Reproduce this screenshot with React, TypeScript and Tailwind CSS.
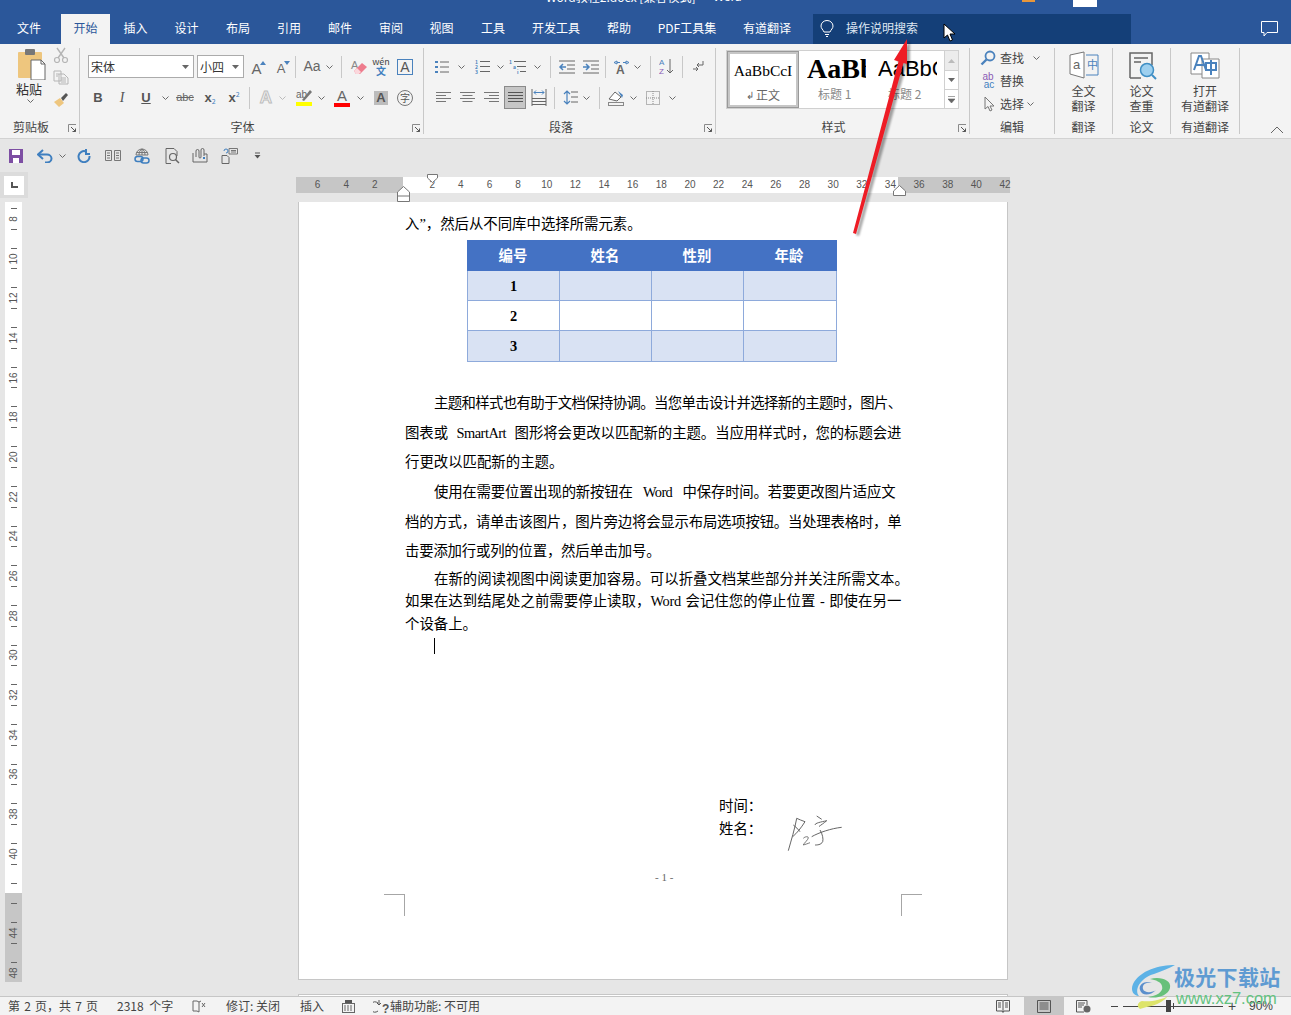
import React from "react";

const G = "#666666";
const B = "#4a82bd";

function Caret({ c = "#6a6a6a" }: { c?: string }) {
  return (
    <svg width="7" height="4" viewBox="0 0 7 4" fill="none">
      <path d="M0.5 0.5 L3.5 3.5 L6.5 0.5" stroke={c} strokeWidth="1" />
    </svg>
  );
}
function S({ className = "", children }: { className?: string; children?: React.ReactNode }) {
  return <div className={"flex items-center justify-center shrink-0 " + className}>{children}</div>;
}
function Sep({ className = "" }: { className?: string }) {
  return <div className={"w-px h-[22px] bg-[#c8c8c8] shrink-0 " + className} />;
}
function Launcher() {
  return (
    <svg className="absolute right-[2px] bottom-[1px]" width="9" height="9" viewBox="0 0 9 9" fill="none">
      <path d="M0.5 8 V0.5 H8" stroke="#8a8a8a" />
      <path d="M3 3 L7.5 7.5 M7.5 4.5 V7.5 H4.5" stroke="#555" />
    </svg>
  );
}
function Lines({ ys, x1 = 1, x2 = 19, c = G }: { ys: number[]; x1?: number; x2?: number; c?: string }) {
  return <path d={ys.map((y) => `M${x1} ${y}H${x2}`).join("")} stroke={c} strokeWidth="1" fill="none" />;
}
function Ico({ w = 20, h = 18, children }: { w?: number; h?: number; children: React.ReactNode }) {
  return (
    <svg width={w} height={h} viewBox={`0 0 ${w} ${h}`} fill="none">
      {children}
    </svg>
  );
}

const tabClass = "flex items-center justify-center shrink-0 h-[30px] pb-[2px] text-white text-[12px]";
const label = "h-[17px] leading-[19px]";

function Ribbon() {
  return (
    <div className="h-[95px] shrink-0 bg-[#f3f3f3] border-b border-[#d2d2d2] flex pt-[4px] text-[#444] text-[12px] relative">
      {/* clipboard */}
      <div className="w-[80px] h-[86px] border-r border-[#c8c8c8] relative shrink-0 flex flex-col">
        <div className="h-[69px] flex">
          <div className="w-[48px] pl-[10px] flex flex-col items-center">
            <svg className="ml-[3px]" width="30" height="32" viewBox="0 0 30 32" fill="none">
              <rect x="2" y="4" width="24" height="26" rx="1" fill="#eec67e" />
              <rect x="9" y="1" width="10" height="6" rx="1" fill="#777" />
              <path d="M15 12 H25 L29 16 V32 H15 Z" fill="#fff" stroke="#666" />
              <path d="M25 12 V16 H29" stroke="#666" />
            </svg>
            <div className="text-[13px] leading-[16px] text-[#333] mt-[1px]">粘贴</div>
            <div className="mt-[2px] ml-[3px]"><Caret /></div>
          </div>
          <div className="flex flex-col items-center w-[24px] ml-[1px] -mt-[1px] gap-[7px]">
            <Ico w={16} h={16}>
              <path d="M4 1 L11 11 M12 1 L5 11" stroke="#b5b5b5" strokeWidth="1.4" />
              <circle cx="4" cy="13" r="2.5" stroke="#b5b5b5" strokeWidth="1.2" />
              <circle cx="12" cy="13" r="2.5" stroke="#b5b5b5" strokeWidth="1.2" />
            </Ico>
            <Ico w={16} h={15}>
              <path d="M1 1 H8 V11 H1 Z M6 4 H11 L15 8 V14 H6 Z" stroke="#b5b5b5" fill="#f3f3f3" />
              <path d="M8 8 H13 M8 10 H13 M8 12 H13 M3 4H6M3 6H5" stroke="#b5b5b5" />
            </Ico>
            <Ico w={16} h={16}>
              <path d="M1 10 L7 6 L11 11 L6 15 Z" fill="#eec67e" />
              <path d="M8 6 L13 1 L15 3 L10 9 Z" fill="#555" />
            </Ico>
          </div>
        </div>
        <div className={label + " pl-[13px]"}>剪贴板</div>
        <Launcher />
      </div>

      {/* font */}
      <div className="w-[344px] h-[86px] border-r border-[#c8c8c8] relative shrink-0 flex flex-col">
        <div className="h-[69px] pt-[7px] flex flex-col gap-[8px]">
          <div className="flex items-center h-[23px] pl-[8px]">
            <div className="w-[106px] h-[23px] border border-[#ababab] bg-white flex items-center justify-between pl-[2px] pr-[4px] shrink-0">
              <span className="text-[#333]">宋体</span>
              <svg width="7" height="4" viewBox="0 0 7 4"><path d="M0 0H7L3.5 4Z" fill="#666" /></svg>
            </div>
            <div className="ml-[3px] w-[47px] h-[23px] border border-[#ababab] bg-white flex items-center justify-between pl-[2px] pr-[4px] shrink-0">
              <span className="text-[#333]">小四</span>
              <svg width="7" height="4" viewBox="0 0 7 4"><path d="M0 0H7L3.5 4Z" fill="#666" /></svg>
            </div>
            <S className="ml-[3px] w-[22px] relative">
              <span className="text-[15px] text-[#666] font-['Liberation_Sans'] leading-none mt-[3px] -ml-[3px]">A</span>
              <svg className="absolute right-[3px] top-[3px]" width="6" height="4"><path d="M0 4H6L3 0Z" fill={B} /></svg>
            </S>
            <S className="ml-[2px] w-[22px] relative">
              <span className="text-[13px] text-[#666] font-['Liberation_Sans'] leading-none mt-[4px] -ml-[2px]">A</span>
              <svg className="absolute right-[3px] top-[3px]" width="6" height="4"><path d="M0 0H6L3 4Z" fill={B} /></svg>
            </S>
            <Sep className="ml-[2px]" />
            <S className="ml-[5px] w-[22px]"><span className="text-[14px] text-[#666] font-['Liberation_Sans']">Aa</span></S>
            <S className="w-[12px]"><Caret /></S>
            <Sep className="ml-[6px]" />
            <S className="ml-[6px] w-[22px]">
              <Ico w={18} h={18}>
                <text x="1" y="11" fontSize="11" fill="#888" fontFamily="Liberation Sans">A</text>
                <path d="M4 13 L12 5 L17 9 L10 16 H6 Z" fill="#ee7c8d" />
                <path d="M4 13 L7 10 L11 14 L9 16 H6 Z" fill="#fbd7dc" />
              </Ico>
            </S>
            <S className="w-[22px]">
              <div className="flex flex-col items-center leading-none">
                <span className="text-[9px] text-[#444] leading-[9px]">wén</span>
                <span className="text-[10px] text-[#3f7fbf] leading-[10px] font-bold">文</span>
              </div>
            </S>
            <S className="ml-[2px] w-[22px]">
              <div className="w-[16px] h-[16px] border border-[#4a82bd] flex items-center justify-center text-[14px] text-[#555] font-['Liberation_Sans'] leading-none">A</div>
            </S>
          </div>
          <div className="flex items-center h-[23px] pl-[6px]">
            <S className="w-[24px] font-bold text-[#555] font-['Liberation_Sans'] text-[13px]">B</S>
            <S className="w-[24px] italic text-[#555] font-['Liberation_Serif'] text-[14px]">I</S>
            <S className="w-[24px]"><span className="underline font-bold text-[#555] font-['Liberation_Sans'] text-[13px]">U</span></S>
            <S className="w-[14px]"><Caret /></S>
            <S className="w-[26px]"><span className="line-through text-[#666] font-['Liberation_Sans'] text-[11px]">abc</span></S>
            <S className="w-[24px]"><span className="font-bold text-[#555] text-[13px] font-['Liberation_Sans']">x</span><span className="text-[7px] text-[#3f7fbf] mt-[7px]">2</span></S>
            <S className="w-[24px]"><span className="font-bold text-[#555] text-[13px] font-['Liberation_Sans']">x</span><span className="text-[7px] text-[#3f7fbf] -mt-[6px]">2</span></S>
            <Sep className="ml-[3px]" />
            <S className="ml-[4px] w-[24px]"><span className="text-[17px] text-[#f3f3f3] font-bold font-['Liberation_Sans'] [-webkit-text-stroke:1px_#bdbdbd]">A</span></S>
            <S className="w-[8px]"><Caret c="#bbb" /></S>
            <S className="ml-[6px] w-[24px]">
              <Ico w={18} h={19}>
                <text x="1" y="10" fontSize="10" fill="#666" fontFamily="Liberation Sans">ab</text>
                <path d="M7 12 L15 2 L17 4 L9 13 Z" fill="#777" />
                <rect x="1" y="14" width="16" height="4" fill="#ffff00" />
              </Ico>
            </S>
            <S className="w-[10px]"><Caret /></S>
            <S className="ml-[4px] w-[24px]">
              <div className="flex flex-col items-center">
                <span className="text-[15px] leading-[14px] text-[#666] font-['Liberation_Sans']">A</span>
                <div className="w-[16px] h-[4px] bg-[#ff0000]" />
              </div>
            </S>
            <S className="w-[12px]"><Caret /></S>
            <S className="ml-[3px] w-[24px]">
              <div className="w-[14px] h-[14px] bg-[#bcbcbc] flex items-center justify-center text-[13px] text-[#555] font-bold font-['Liberation_Sans'] leading-none">A</div>
            </S>
            <S className="w-[24px]">
              <div className="w-[16px] h-[16px] rounded-full border border-[#777] flex items-center justify-center text-[10px] text-[#555] leading-none">字</div>
            </S>
          </div>
        </div>
        <div className={label + " text-center pr-[18px]"}>字体</div>
        <Launcher />
      </div>

      {/* paragraph */}
      <div className="w-[292px] h-[86px] border-r border-[#c8c8c8] relative shrink-0 flex flex-col">
        <div className="h-[69px] pt-[7px] flex flex-col gap-[8px]">
          <div className="flex items-center h-[23px] pl-[6px]">
            <S className="w-[24px]">
              <Ico w={14} h={14}>
                <Lines ys={[2, 7, 12]} x1={5} x2={14} />
                <path d="M0 1h3v2h-3zM0 6h3v2h-3zM0 11h3v2h-3z" fill={B} />
              </Ico>
            </S>
            <S className="w-[14px]"><Caret /></S>
            <S className="ml-[2px] w-[24px]">
              <Ico w={15} h={15}>
                <Lines ys={[2.5, 7.5, 12.5]} x1={5} x2={15} />
                <text x="0" y="5" fontSize="5" fill={B} fontWeight="bold">1</text>
                <text x="0" y="10" fontSize="5" fill={B} fontWeight="bold">2</text>
                <text x="0" y="15" fontSize="5" fill={B} fontWeight="bold">3</text>
              </Ico>
            </S>
            <S className="w-[12px]"><Caret /></S>
            <S className="w-[22px]">
              <Ico w={17} h={15}>
                <path d="M5 2.5H17M8 7.5H17M11 12.5H17" stroke={G} />
                <text x="0" y="5" fontSize="5" fill={B} fontWeight="bold">1</text>
                <text x="4" y="10" fontSize="5" fill={B} fontWeight="bold">a</text>
                <text x="8" y="15" fontSize="5" fill={B} fontWeight="bold">i</text>
              </Ico>
            </S>
            <S className="w-[18px]"><Caret /></S>
            <Sep className="ml-[4px]" />
            <S className="ml-[4px] w-[22px]">
              <Ico w={17} h={14}>
                <path d="M1 1H17M9 5H17M9 9H17M1 13H17" stroke={G} />
                <path d="M8 7H2M5 4L2 7L5 10" stroke={B} strokeWidth="1.5" />
              </Ico>
            </S>
            <S className="ml-[2px] w-[22px]">
              <Ico w={17} h={14}>
                <path d="M1 1H17M9 5H17M9 9H17M1 13H17" stroke={G} />
                <path d="M1 7H7M4 4L7 7L4 10" stroke={B} strokeWidth="1.5" />
              </Ico>
            </S>
            <Sep className="ml-[4px]" />
            <S className="ml-[4px] w-[22px]">
              <Ico w={17} h={14}>
                <path d="M1 2.5L4 1V4ZM16 2.5L13 1V4ZM4 2.5H7M10 2.5H13" stroke={B} />
                <text x="3" y="14" fontSize="12" fontWeight="bold" fill={G} fontFamily="Liberation Sans">A</text>
              </Ico>
            </S>
            <S className="w-[10px]"><Caret /></S>
            <Sep className="ml-[8px]" />
            <S className="ml-[4px] w-[22px]">
              <Ico w={15} h={17}>
                <text x="0" y="7" fontSize="8" fill={B} fontFamily="Liberation Sans">A</text>
                <text x="0" y="16" fontSize="8" fill="#8a5bb5" fontFamily="Liberation Sans">Z</text>
                <path d="M11 1V15M8 12L11 15L14 12" stroke={G} />
              </Ico>
            </S>
            <Sep className="ml-[5px]" />
            <S className="ml-[4px] w-[22px]">
              <Ico w={12} h={13}>
                <path d="M11 1V5H5M7 3L5 5L7 7" stroke={G} />
                <path d="M1 9H6M4 7L6 9L4 11" stroke={G} />
              </Ico>
            </S>
          </div>
          <div className="flex items-center h-[23px] pl-[7px]">
            <S className="w-[24px]"><Ico w={15} h={11}><Lines ys={[0.5, 3.5, 6.5, 9.5]} x1={0} x2={15} c="#777" /><path d="M10 3.5H15M10 9.5H15" stroke="#f3f3f3" /></Ico></S>
            <S className="w-[24px]"><Ico w={15} h={11}><Lines ys={[0.5, 3.5, 6.5, 9.5]} x1={0} x2={15} c="#777" /><path d="M0 3.5H2.5M12.5 3.5H15M0 9.5H2.5M12.5 9.5H15" stroke="#f3f3f3" /></Ico></S>
            <S className="w-[24px]"><Ico w={15} h={11}><Lines ys={[0.5, 3.5, 6.5, 9.5]} x1={0} x2={15} c="#777" /><path d="M0 3.5H5M0 9.5H5" stroke="#f3f3f3" /></Ico></S>
            <S className="ml-[1px] w-[22px] h-[23px] bg-[#c6c6c6] border border-[#8a8a8a]"><Ico w={15} h={11}><Lines ys={[0.5, 3.5, 6.5, 9.5]} x1={0} x2={15} c="#555" /></Ico></S>
            <S className="ml-[2px] w-[22px]">
              <Ico w={16} h={17}>
                <path d="M1 0V17M15 0V17M1 9.5H15M1 12.5H15M1 15.5H15" stroke={G} />
                <path d="M3 3.5H13M5 1.5L3 3.5L5 5.5M11 1.5L13 3.5L11 5.5" stroke={B} />
              </Ico>
            </S>
            <Sep className="ml-[4px]" />
            <S className="ml-[4px] w-[22px]">
              <Ico w={15} h={17}>
                <path d="M4 2V15M1 5L4 2L7 5M1 12L4 15L7 12" stroke={B} strokeWidth="1.2" />
                <path d="M8 3H15M8 8H15M8 13H15" stroke={G} />
              </Ico>
            </S>
            <S className="w-[10px]"><Caret /></S>
            <Sep className="ml-[8px]" />
            <S className="ml-[5px] w-[22px]">
              <Ico w={16} h={17}>
                <path d="M1 10L7 3L13 8L9 12Z" stroke={G} fill="#fff" />
                <path d="M10 2 L15 6 L14 9Z" fill={B} />
                <rect x="0.5" y="13.5" width="15" height="3" fill="#f3f3f3" stroke="#888" />
              </Ico>
            </S>
            <S className="w-[12px]"><Caret /></S>
            <S className="ml-[3px] w-[22px]">
              <Ico w={14} h={14}>
                <rect x="0.5" y="0.5" width="13" height="13" stroke="#777" strokeDasharray="1 1" />
                <path d="M7 0V14M0 7H14" stroke="#888" strokeDasharray="1 1" />
              </Ico>
            </S>
            <S className="w-[16px]"><Caret /></S>
          </div>
        </div>
        <div className={label + " text-center pr-[17px]"}>段落</div>
        <Launcher />
      </div>

      {/* styles */}
      <div className="w-[254px] h-[86px] border-r border-[#c8c8c8] relative shrink-0 flex flex-col">
        <div className="h-[69px] pt-[2px] pl-[10px]">
          <div className="w-[233px] h-[59px] border border-[#d0d0d0] bg-white flex">
            <div className="w-[72px] h-full border-[3px] border-[#c6c6c6] outline outline-1 outline-[#999] -outline-offset-1 flex flex-col items-center overflow-hidden shrink-0">
              <div className="h-[33px] leading-[34px] text-[15.5px] text-black font-['Liberation_Serif'] whitespace-nowrap">AaBbCcI</div>
              <div className="text-[12px] text-[#666] flex items-center gap-[2px] leading-[15px]"><span className="text-[10px]">↲</span><span>正文</span></div>
            </div>
            <div className="w-[70px] h-full flex flex-col shrink-0 overflow-hidden pl-[8px]">
              <div className="h-[35px] leading-[35px] text-[28px] font-bold text-black font-['Liberation_Serif'] whitespace-nowrap overflow-hidden w-[59px]">AaBb</div>
              <div className="text-[#888] leading-[16px] pl-[11px]">标题 1</div>
            </div>
            <div className="w-[75px] h-full flex flex-col shrink-0 overflow-hidden pl-[9px]">
              <div className="h-[35px] leading-[35px] text-[22px] text-black font-['Liberation_Sans'] whitespace-nowrap overflow-hidden w-[59px]">AaBbCc</div>
              <div className="text-[#888] leading-[16px] pl-[10px]">标题 2</div>
            </div>
            <div className="w-[14px] h-full flex flex-col shrink-0 border-l border-[#d0d0d0]">
              <S className="h-[20px] border-b border-[#d0d0d0] bg-[#ececec]"><svg width="7" height="4"><path d="M0 4H7L3.5 0Z" fill="#bbb" /></svg></S>
              <S className="h-[19px] border-b border-[#d0d0d0]"><svg width="7" height="4"><path d="M0 0H7L3.5 4Z" fill="#666" /></svg></S>
              <S className="flex-1"><svg width="7" height="7"><path d="M0 0.5H7M0 3H7L3.5 7Z" stroke="#666" strokeWidth="0.6" fill="#666" /></svg></S>
            </div>
          </div>
        </div>
        <div className={label + " text-center pr-[18px]"}>样式</div>
        <Launcher />
      </div>

      {/* editing */}
      <div className="w-[85px] h-[86px] border-r border-[#c8c8c8] shrink-0 flex flex-col">
        <div className="h-[71px] flex flex-col pl-[10px] -mt-[2px]">
          <div className="h-[23px] flex items-center">
            <Ico w={16} h={16}>
              <circle cx="10" cy="6" r="4.5" stroke={B} strokeWidth="1.8" />
              <path d="M6.5 9.5L1.5 14.5" stroke={B} strokeWidth="2.4" />
            </Ico>
            <span className="ml-[4px]">查找</span>
            <span className="ml-[9px]"><Caret /></span>
          </div>
          <div className="h-[23px] flex items-center">
            <div className="w-[16px] flex flex-col items-center leading-[8px] text-[10px] font-['Liberation_Sans']">
              <span className="text-[#8a5bb5]">ab</span>
              <span className="text-[#3f7fbf] ml-[2px]">ac</span>
            </div>
            <span className="ml-[4px]">替换</span>
          </div>
          <div className="h-[23px] flex items-center">
            <Ico w={16} h={16}>
              <path d="M5 1V13L8 10.5L10 15L12 14L10 10H14Z" stroke="#777" fill="#f3f3f3" />
            </Ico>
            <span className="ml-[4px]">选择</span>
            <span className="ml-[3px]"><Caret /></span>
          </div>
        </div>
        <div className={label + " text-center"}>编辑</div>
      </div>

      {/* translate */}
      <div className="w-[58px] h-[86px] border-r border-[#c8c8c8] shrink-0 flex flex-col items-center">
        <div className="h-[69px] flex flex-col items-center">
          <div className="h-[35px] pt-[3px]">
            <Ico w={30} h={28}>
              <path d="M1 4L15 1V27L1 23Z" stroke="#777" fill="#fff" />
              <text x="4" y="18" fontSize="13" fill="#666" fontFamily="Liberation Sans">a</text>
              <path d="M17 4H29V24H17" stroke={B} fill="#f3f3f3" />
              <text x="18" y="18" fontSize="11" fill={B}>中</text>
            </Ico>
          </div>
          <div className="leading-[15px] text-center text-[12px]">全文<br />翻译</div>
        </div>
        <div className={label}>翻译</div>
      </div>

      {/* paper */}
      <div className="w-[58px] h-[86px] border-r border-[#c8c8c8] shrink-0 flex flex-col items-center">
        <div className="h-[69px] flex flex-col items-center">
          <div className="h-[35px] pt-[3px]">
            <Ico w={30} h={30}>
              <path d="M3 27V2H25V14" stroke="#666" strokeWidth="1.5" />
              <path d="M3 27H14" stroke="#666" strokeWidth="1.5" />
              <path d="M7 7H21M7 11H14" stroke="#666" strokeWidth="1.5" />
              <circle cx="20" cy="19" r="6.5" fill="#9ed0ef" stroke="#3f8fc5" strokeWidth="1.5" />
              <path d="M25 24L29 28" stroke="#3f8fc5" strokeWidth="2" />
            </Ico>
          </div>
          <div className="leading-[15px] text-center text-[12px]">论文<br />查重</div>
        </div>
        <div className={label}>论文</div>
      </div>

      {/* youdao */}
      <div className="w-[69px] h-[86px] border-r border-[#c8c8c8] shrink-0 flex flex-col items-center">
        <div className="h-[69px] flex flex-col items-center">
          <div className="h-[35px] pt-[4px]">
            <Ico w={30} h={27}>
              <path d="M1 1H19V22H1Z" stroke="#888" fill="#fff" />
              <path d="M12 7H29V26H12Z" stroke="#888" fill="#fff" />
              <path d="M4 18L9 4H11L16 18M6 13H14" stroke={B} strokeWidth="2" />
              <path d="M16 11H26V18H16ZM21 8V23" stroke={B} strokeWidth="2" />
            </Ico>
          </div>
          <div className="leading-[15px] text-center text-[12px]">打开<br />有道翻译</div>
        </div>
        <div className={label}>有道翻译</div>
      </div>

      <svg className="absolute left-[1270px] top-[82px]" width="14" height="8" viewBox="0 0 14 8" fill="none">
        <path d="M1 7L7 1L13 7" stroke="#666" />
      </svg>
    </div>
  );
}

function QAT() {
  return (
    <div className="h-[33px] shrink-0 bg-[#e6e6e6] flex items-center pl-[9px]">
      <S className="w-[14px]">
        <Ico w={14} h={14}>
          <path d="M0 0H14V14H0Z" fill="#7d4ea3" />
          <rect x="3" y="1" width="8" height="5" fill="#fff" />
          <rect x="4" y="9" width="6" height="5" fill="#fff" />
        </Ico>
      </S>
      <S className="ml-[12px] w-[20px]">
        <Ico w={16} h={14}>
          <path d="M6 1L1 5.5L6 10" stroke="#3f7fbf" strokeWidth="2" />
          <path d="M2 5.5H10A4.5 4 0 0 1 10 13.5H8" stroke="#3f7fbf" strokeWidth="2" />
        </Ico>
      </S>
      <S className="ml-[3px] w-[8px]"><Caret /></S>
      <S className="ml-[9px] w-[18px]">
        <Ico w={14} h={14}>
          <path d="M9 2.5A5.5 5.5 0 1 0 12.5 7" stroke="#3f7fbf" strokeWidth="2" />
          <path d="M9 0V5H13" stroke="#3f7fbf" strokeWidth="2" />
        </Ico>
      </S>
      <S className="ml-[11px] w-[18px]">
        <Ico w={16} h={11}>
          <path d="M0.5 0.5H6.5V10.5H0.5ZM9.5 0.5H15.5V10.5H9.5ZM2 3H5M2 5.5H5M2 8H5M11 3H14M11 5.5H14M11 8H14" stroke="#777" />
        </Ico>
      </S>
      <S className="ml-[11px] w-[18px]">
        <Ico w={16} h={16}>
          <path d="M2 7A6 6 0 0 1 14 7ZM8 1V7M5 7C5 4 6 2 8 1C10 2 11 4 11 7M2.5 4.5H13.5" stroke="#777" />
          <rect x="1" y="8.5" width="8" height="5" rx="2.5" stroke="#3f7fbf" strokeWidth="1.5" />
          <rect x="7" y="10" width="8" height="5" rx="2.5" stroke="#3f7fbf" strokeWidth="1.5" />
        </Ico>
      </S>
      <S className="ml-[12px] w-[18px]">
        <Ico w={15} h={16}>
          <path d="M1 0.5H9L12 3.5V8M1 0.5V15.5H6" stroke="#666" />
          <circle cx="8" cy="9" r="3.5" stroke="#666" strokeWidth="1.2" />
          <path d="M10.5 11.5L14 15" stroke="#666" strokeWidth="1.5" />
        </Ico>
      </S>
      <S className="ml-[10px] w-[18px]">
        <Ico w={16} h={15}>
          <path d="M1 5V14H15V6H12" stroke="#666" />
          <path d="M4 9V3A1.5 1.5 0 0 1 7 3V9A1 1 0 0 0 9 9V2A1.5 1.5 0 0 1 12 2V8" stroke="#666" />
          <rect x="11" y="9" width="2" height="2" fill="#3f7fbf" />
        </Ico>
      </S>
      <S className="ml-[11px] w-[18px]">
        <Ico w={17} h={16}>
          <path d="M8 0.5H16.5V6H8ZM10 2.5H15M10 4H15" stroke="#777" />
          <path d="M1 7.5H6L8 9.5V15.5H1Z" stroke="#666" />
          <path d="M3 3A2 2 0 1 1 5 5" stroke="#3f7fbf" />
        </Ico>
      </S>
      <S className="ml-[10px] w-[18px]">
        <Ico w={7} h={7}>
          <path d="M1 1H6" stroke="#555" />
          <path d="M0.5 3H6.5L3.5 6.5Z" fill="#555" />
        </Ico>
      </S>
    </div>
  );
}

const hNums = ["6", "4", "2", "", "2", "4", "6", "8", "10", "12", "14", "16", "18", "20", "22", "24", "26", "28", "30", "32", "34", "36", "38", "40", "42"];

function HRuler() {
  return (
    <div className="h-[30px] shrink-0 flex bg-[#e6e6e6] relative">
      <div className="w-[28px] h-[26px] bg-[#dcdcdc] flex items-center justify-center shrink-0">
        <div className="w-[20px] h-[19px] bg-white flex items-center justify-center">
          <svg width="7" height="6"><path d="M1 0V5H7" stroke="#555" strokeWidth="2" fill="none" /></svg>
        </div>
      </div>
      <div className="ml-[268px] mt-[5px] w-[714px] h-[16px] bg-[linear-gradient(90deg,#c6c6c6_107px,#fff_107px,#fff_602px,#c6c6c6_602px)] flex pl-[7.3px] text-[10px] text-[#555] font-['Liberation_Sans'] shrink-0">
        {hNums.map((n, i) => (
          <div key={i} className="w-[28.65px] shrink-0 text-center leading-[16px]">{n}</div>
        ))}
      </div>
      <svg className="absolute left-[427px] top-[2px]" width="11" height="9" viewBox="0 0 11 9">
        <path d="M0.5 0.5H10.5V4L5.5 8.5L0.5 4Z" fill="#fff" stroke="#777" />
      </svg>
      <svg className="absolute left-[397px] top-[14px]" width="13" height="16" viewBox="0 0 13 16">
        <path d="M0.5 6L6.5 0.5L12.5 6V15.5H0.5Z M0.5 10H12.5" fill="#fff" stroke="#777" />
      </svg>
      <svg className="absolute left-[893px] top-[13px]" width="13" height="11" viewBox="0 0 13 11">
        <path d="M0.5 6L6.5 0.5L12.5 6V10.5H0.5Z" fill="#fff" stroke="#777" />
      </svg>
    </div>
  );
}

const vNums = ["8", "10", "12", "14", "16", "18", "20", "22", "24", "26", "28", "30", "32", "34", "36", "38", "40", "", "44", "48"];

function VRuler() {
  return (
    <div className="ml-[5px] w-[17px] h-[780px] shrink-0 overflow-hidden bg-[linear-gradient(180deg,#fff_691px,#c6c6c6_691px)] text-[10px] text-[#555] font-['Liberation_Sans']">
      <div className="-mt-[3px] flex flex-col">
        {vNums.map((n, i) => (
          <div key={i} className="h-[39.7px] shrink-0 flex flex-col items-center justify-between py-[9px]">
            <div className="w-[6px] h-px bg-[#666]" />
            <div className="-rotate-90 leading-none h-[10px] flex items-center">{n}</div>
            <div className="w-[6px] h-px bg-[#666]" />
          </div>
        ))}
      </div>
    </div>
  );
}

const line = "whitespace-nowrap h-[29.7px] leading-[29.7px] [text-align-last:justify]";
const left = "whitespace-nowrap h-[29.7px] leading-[29.7px] text-left";
const line2 = "whitespace-nowrap h-[22.3px] leading-[22.3px] [text-align-last:justify]";
const th = "w-[92px] shrink-0 flex items-center justify-center pt-[2px] font-bold text-white text-[14.4px]";
const td = "w-[92px] shrink-0 flex items-center justify-center pt-[2px] border-r border-[#8eaadb] last:border-r-0 font-bold text-[14.4px] text-black";

function Row({ n, shaded, h }: { n: string; shaded?: boolean; h: string }) {
  return (
    <div className={"flex border-b border-[#8eaadb] " + h + (shaded ? " bg-[#d9e2f3]" : " bg-white")}>
      <div className={td}>{n}</div>
      <div className={td} />
      <div className={td} />
      <div className={td} />
    </div>
  );
}

function Page() {
  return (
    <div className="ml-[276px] w-[710px] h-[778px] bg-white border-x border-b border-[#c6c6c6] shrink-0 pl-[106px] text-black text-[14.4px] font-['Liberation_Serif','Noto_Sans_CJK_SC',serif] relative">
      <div className="mt-[11px] h-[22px] leading-[22px] whitespace-nowrap">入”，然后从不同库中选择所需元素。</div>
      <div className="ml-[62px] mt-[5px] w-[370px] border-x border-[#8eaadb]">
        <div className="flex h-[31px] bg-[#4472c4] -mx-px">
          <div className={th}>编号</div>
          <div className={th}>姓名</div>
          <div className={th}>性别</div>
          <div className={th}>年龄</div>
        </div>
        <Row n="1" shaded h="h-[30px]" />
        <Row n="2" h="h-[30px]" />
        <Row n="3" shaded h="h-[31px]" />
      </div>
      <div className="mt-[27px]">
        <div className={line + " w-[496px] pl-[29px] tracking-[-1.1px]"}>主题和样式也有助于文档保持协调。当您单击设计并选择新的主题时，图片、</div>
        <div className={line + " w-[496px] tracking-[-0.5px] [word-spacing:5px]"}>图表或 SmartArt 图形将会更改以匹配新的主题。当应用样式时，您的标题会进</div>
        <div className={left}>行更改以匹配新的主题。</div>
        <div className={line + " w-[490px] pl-[29px] tracking-[-0.6px] [word-spacing:7px]"}>使用在需要位置出现的新按钮在 Word 中保存时间。若要更改图片适应文</div>
        <div className={line + " w-[496px] tracking-[-0.7px]"}>档的方式，请单击该图片，图片旁边将会显示布局选项按钮。当处理表格时，单</div>
        <div className={left + " tracking-[-0.2px]"}>击要添加行或列的位置，然后单击加号。</div>
      </div>
      <div className="mt-[1px]">
        <div className={line2 + " w-[498px] pl-[29px]"}>在新的阅读视图中阅读更加容易。可以折叠文档某些部分并关注所需文本。</div>
        <div className={line2 + " w-[496px] tracking-[-0.3px] [word-spacing:1px]"}>如果在达到结尾处之前需要停止读取，Word 会记住您的停止位置 - 即使在另一</div>
        <div className="whitespace-nowrap h-[22.3px] leading-[22.3px]">个设备上。</div>
        <div className="h-[22.3px] pl-[29px] flex items-center"><div className="w-px h-[16px] bg-black" /></div>
      </div>
      <div className="ml-[314px] mt-[138px] h-[22px] leading-[22px]">时间：</div>
      <div className="ml-[314px] mt-[1px] h-[22px] leading-[22px] relative">
        姓名：
        <svg className="absolute left-[67px] top-[-4px]" width="58" height="38" viewBox="0 0 58 38" fill="none">
          <path d="M2.3 36.7C5 27 9 14 10.7 4.3C13 5 16 7 19 7.7C15 14 11 19 6.7 22.7M7.3 11C10 13 12 15 14 17.7" stroke="#555" strokeWidth="0.9" />
          <path d="M17.3 24.3C19 22.5 22.5 22 22.3 24C22 26 18 29 17.3 31C19 30.5 22 29.5 24 28.7" stroke="#555" strokeWidth="0.8" />
          <path d="M30.7 2L35.7 5.3M29 11C29 9 35 8 40.7 6.7C38 9 35 11 33 12.5M25.7 22.7C33 18.5 45 14.5 55.7 13.3M34 16C36.5 20 37.5 25 36.7 27.7C35 31 31 31 29 31" stroke="#555" strokeWidth="0.9" />
        </svg>
      </div>
      <div className="ml-[250px] mt-[30px] h-[14px] leading-[14px] text-[11px] text-[#666] whitespace-nowrap">- 1 -</div>
      <div className="mt-[10px] -ml-[21px] flex">
        <div className="w-[21px] h-[22px] border-t border-r border-[#a6a6a6] shrink-0" />
        <div className="w-[21px] h-[22px] border-t border-l border-[#a6a6a6] shrink-0 ml-[496px]" />
      </div>
    </div>
  );
}

function StatusBar() {
  return (
    <div className="h-[19px] shrink-0 bg-[#f3f3f3] border-t border-[#c6c6c6] flex items-center text-[12px] text-[#444] whitespace-nowrap">
      <span className="ml-[8px] w-[109px] [word-spacing:1.5px]">第 2 页，共 7 页</span>
      <span className="w-[75px] [word-spacing:3px]">2318 个字</span>
      <S className="w-[14px]">
        <Ico w={14} h={13}>
          <path d="M1 1H5L7 2V12L5 11H1ZM7 2L9 1" stroke="#666" />
          <path d="M10 3L13 7M13 3L10 7" stroke="#666" />
        </Ico>
      </S>
      <span className="ml-[20px] w-[74px]">修订: 关闭</span>
      <span className="w-[41px]">插入</span>
      <S className="w-[14px]">
        <Ico w={13} h={13}>
          <rect x="3" y="0" width="7" height="4" fill="#555" />
          <rect x="0.5" y="3.5" width="12" height="9" stroke="#666" />
          <path d="M2 6H11M2 8H11M2 10H11" stroke="#666" strokeDasharray="2 1" />
        </Ico>
      </S>
      <S className="ml-[17px] w-[18px]">
        <Ico w={17} h={15}>
          <path d="M5 4A5 5 0 1 0 5 12M6 1V6M4 4L6 6L8 4" stroke="#555" />
          <text x="9" y="14" fontSize="12" fontWeight="bold" fill="#555" fontFamily="Liberation Sans">?</text>
        </Ico>
      </S>
      <span>辅助功能: 不可用</span>
      <div className="ml-auto flex items-center h-full">
        <S className="w-[14px]">
          <Ico w={14} h={13}>
            <path d="M0.5 0.5H6.5L7 1.5L7.5 0.5H13.5V11H8L7 12.5L6 11H0.5ZM7 1.5V12M2 3H5M2 5H5M2 7H5M9 3H12M9 5H12M9 7H12" stroke="#555" />
          </Ico>
        </S>
        <S className="ml-[14px] w-[40px] h-full bg-[#c6c6c6]">
          <Ico w={14} h={13}>
            <path d="M0.5 0.5H13.5V12.5H0.5ZM2.5 3H11.5M2.5 5H11.5M2.5 7H11.5M2.5 9H11.5" stroke="#555" />
          </Ico>
        </S>
        <S className="ml-[12px] w-[15px]">
          <Ico w={15} h={13}>
            <path d="M8 12H0.5V0.5H11V5M2 3H9M2 5H8M2 7H6" stroke="#555" />
            <circle cx="11" cy="9" r="3.5" fill="#666" />
          </Ico>
        </S>
        <S className="ml-[19px] w-[8px]"><div className="w-[7px] h-px bg-[#444]" /></S>
        <div className="ml-[5px] w-[100px] h-[12px] relative flex items-center">
          <div className="w-full h-px bg-[#444]" />
          <div className="absolute left-[43px] top-0 w-[5px] h-[12px] bg-[#444]" />
          <div className="absolute left-[50px] top-[3px] w-px h-[6px] bg-[#444]" />
        </div>
        <S className="ml-[4px] w-[10px] text-[14px] font-['Liberation_Sans'] text-[#444]">+</S>
        <span className="ml-[12px] w-[42px] text-[12px] font-['Liberation_Sans']">90%</span>
      </div>
    </div>
  );
}

export default function App() {
  return (
    <div className="w-[1291px] h-[1015px] overflow-hidden relative flex flex-col bg-[#e6e6e6] font-['Noto_Sans_CJK_SC',sans-serif]">
      <div className="h-[44px] shrink-0 bg-[#2b579a] flex flex-col">
        <div className="h-[14px] overflow-hidden flex items-start text-white text-[12px] shrink-0">
          <div className="ml-[546px] -mt-[11px] whitespace-nowrap leading-[16px] w-[167px]">Word教程2.docx [兼容模式]</div>
          <div className="-mt-[11px] whitespace-nowrap leading-[16px] font-['Liberation_Sans'] w-[309px]">Word</div>
          <div className="w-[13px] h-[2px] bg-[#e8963a] shrink-0" />
          <div className="ml-[38px] w-[24px] h-[7px] bg-white shrink-0" />
        </div>
        <div className="flex h-[30px] items-start">
          <div className={tabClass + " ml-[5px] w-[48px]"}>文件</div>
          <div className="ml-[8px] flex items-center justify-center shrink-0 h-[30px] pb-[2px] w-[49px] bg-[#f3f3f3] text-[#2b579a] text-[12px]">开始</div>
          <div className={tabClass + " w-[51px]"}>插入</div>
          <div className={tabClass + " w-[51px]"}>设计</div>
          <div className={tabClass + " w-[52px]"}>布局</div>
          <div className={tabClass + " w-[50px]"}>引用</div>
          <div className={tabClass + " w-[52px]"}>邮件</div>
          <div className={tabClass + " w-[50px]"}>审阅</div>
          <div className={tabClass + " w-[51px]"}>视图</div>
          <div className={tabClass + " w-[52px]"}>工具</div>
          <div className={tabClass + " w-[74px]"}>开发工具</div>
          <div className={tabClass + " w-[52px]"}>帮助</div>
          <div className={tabClass + " w-[84px]"}>PDF工具集</div>
          <div className={tabClass + " w-[76px]"}>有道翻译</div>
          <div className="ml-[8px] w-[318px] h-[30px] pb-[2px] bg-[#143f78] flex items-center text-white text-[12px] shrink-0">
            <svg className="ml-[7px] mt-[2px]" width="14" height="18" viewBox="0 0 14 18" fill="none">
              <path d="M4 12C3 9.5 1 8.5 1 6A6 5.5 0 0 1 13 6C13 8.5 11 9.5 10 12Z M5 14.5H9M6 16.5H8" stroke="#fff" />
            </svg>
            <span className="ml-[12px] text-[#dfe7f2]">操作说明搜索</span>
          </div>
          <svg className="ml-[130px] mt-[7px]" width="17" height="16" viewBox="0 0 17 16" fill="none">
            <path d="M0.5 0.5H16.5V11.5H6L3 15V11.5H0.5Z" stroke="#fff" />
          </svg>
        </div>
      </div>
      <Ribbon />
      <QAT />
      <HRuler />
      <div className="flex-1 flex min-h-0 overflow-hidden">
        <VRuler />
        <div className="flex flex-col">
          <Page />
          <div className="ml-[276px] mt-[14px] w-[710px] h-[10px] bg-white border-x border-t border-[#c6c6c6] shrink-0" />
        </div>
      </div>
      <StatusBar />

      {/* red annotation arrow */}
      <svg className="absolute left-[840px] top-[30px] pointer-events-none overflow-visible" width="80" height="215" viewBox="0 0 80 215">
        <path d="M13 203L16 204L63.5 33L67 34L67 9L54 30L58.5 31.5Z" fill="#000" opacity="0.35" transform="translate(3,2)" className="blur-[1px]" />
        <path d="M13 203L16 204L63.5 33L67 34L67 9L54 30L58.5 31.5Z" fill="#ee1c25" />
      </svg>
      {/* mouse pointer */}
      <svg className="absolute left-[943px] top-[23px] pointer-events-none" width="13" height="19" viewBox="0 0 13 19">
        <path d="M1 1V15L4.5 12L7 18L9.5 17L7 11H12Z" fill="#fff" stroke="#000" />
      </svg>
      {/* watermark */}
      <div className="absolute left-[1130px] top-[964px] flex pointer-events-none">
        <svg width="46" height="46" viewBox="0 0 46 46" fill="none">
          <path d="M45 1C30 1 10 6 3 20C0 27 4 32 9 32C4 26 10 14 24 10C32 7 40 4 45 1Z" fill="#5db2e6" />
          <path d="M10 26C8 20 16 16 22 19C15 18 12 21 13 25C14 29 22 29 26 26C20 32 12 32 10 26Z" fill="#5b8fcc" />
          <path d="M20 15C30 12 42 16 40 24C38 32 26 35 18 33C26 32 34 28 32 22C31 18 26 16 20 15Z" fill="#67c07a" />
          <path d="M10 45C18 42 30 42 38 32C32 36 20 38 12 37C8 38 6 42 10 45Z" fill="#dde46a" />
        </svg>
        <div className="ml-[-2px] flex flex-col">
          <div className="text-[21px] leading-[26px] -mt-[1px] font-bold text-[#5f9bd2] tracking-[0.3px] whitespace-nowrap">极光下载站</div>
          <div className="text-[16.5px] leading-[20px] -mt-[1px] ml-[2px] text-[#62c27f] font-['Liberation_Sans'] whitespace-nowrap">www.xz7.com</div>
        </div>
      </div>
    </div>
  );
}
